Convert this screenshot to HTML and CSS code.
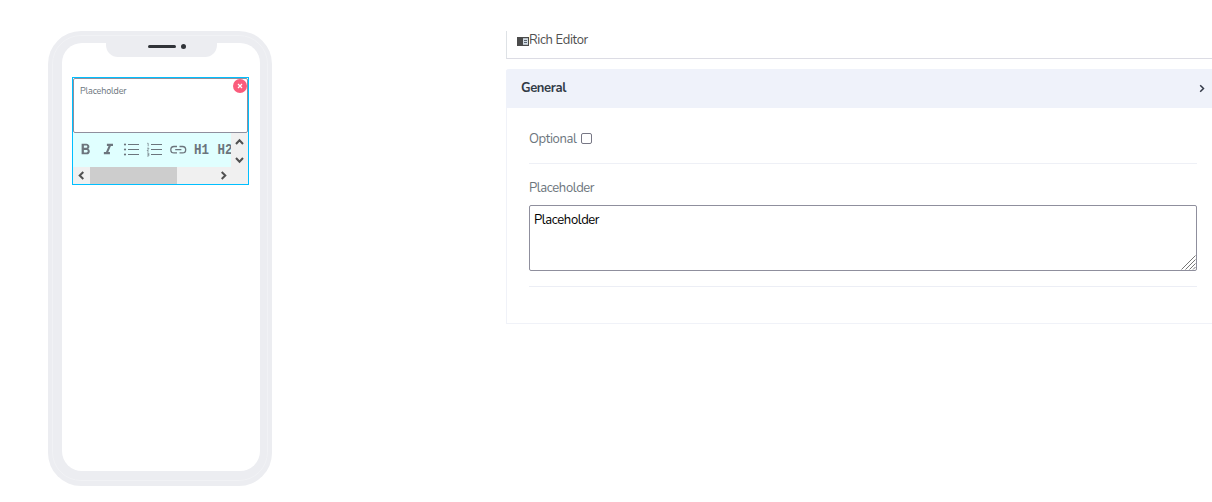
FILE: index.html
```html
<!DOCTYPE html>
<html lang="en">
<head>
<meta charset="utf-8">
<title>Rich Editor</title>
<link rel="stylesheet" href="styles.css">
</head>
<body>
<main class="page">
  <section class="phone">
    <div class="screen">
      <div class="notch"><span class="speaker"></span><span class="camera"></span></div>
      <div class="editor">
        <div class="editor-text">Placeholder</div>
        <button class="remove" aria-label="Remove"><svg width="6" height="6" viewBox="0 0 6 6"><path d="M1 1l4 4M5 1l-4 4"/></svg></button>
        <div class="tools">
          <svg class="toolbar" width="158" height="34" viewBox="0 0 158 34">
            <g transform="translate(3.3 7.6) scale(.76)"><path d="M15.6 10.79c.97-.67 1.65-1.77 1.65-2.79 0-2.26-1.75-4-4-4H7v14h7.04c2.09 0 3.71-1.7 3.71-3.79 0-1.52-.86-2.82-2.15-3.42zM10 6.500h3c.83 0 1.500.67 1.500 1.500s-.67 1.500-1.500 1.500h-3v-3zm3.500 9H10v-3h3.500c.83 0 1.500.67 1.500 1.500s-.67 1.500-1.500 1.500z"/></g>
            <g transform="translate(26.300 7.600) scale(.76)"><path d="M10 4v3h2.210l-3.420 8H6v3h8v-3h-2.210l3.420-8H18V4z"/></g>
            <path d="M55 11h11v1H55zm0 5h11v1H55zm0 5h11v1H55z"/>
            <circle cx="52" cy="11.500" r="1.100"/><circle cx="52" cy="16.500" r="1.100"/><circle cx="52" cy="21.500" r="1.100"/>
            <path d="M78 11h11v1H78zm0 5h11v1H78zm0 5h11v1H78z"/>
            <path class="numbers" d="M74.200 10.300h1v3M74 15.200h2l-2 2.800h2M74 20h1.800v3H74m.5-1.500h1.300"/>
            <path class="link" d="M104 13.500h-3a3.200 3.200 0 0 0 0 6.400h3M106.500 13.500h3a3.200 3.200 0 0 1 0 6.400h-3M102.200 16.700h6.200"/>
            <text x="121" y="21" textLength="15" lengthAdjust="spacingAndGlyphs">H1</text>
            <text x="144.500" y="21" textLength="15" lengthAdjust="spacingAndGlyphs">H2</text>
          </svg>
          <div class="vscroll">
            <svg width="17" height="34" viewBox="0 0 17 34"><path d="M5 11l3.500-3.800L12 11M5 25l3.500 3.800L12 25"/></svg>
          </div>
          <div class="hscroll">
            <svg width="17" height="17" viewBox="0 0 17 17"><path d="M10.300 5L6.700 8.500l3.600 3.500"/></svg>
            <span class="thumb"></span>
            <svg class="right" width="17" height="17" viewBox="0 0 17 17"><path d="M6.700 5l3.600 3.500L6.700 12"/></svg>
          </div>
        </div>
      </div>
    </div>
  </section>
  <section class="settings">
    <header class="title"><svg width="12" height="10" viewBox="0 0 12 10"><path class="fill" d="M0 0h12v9H0z"/><path class="pane" d="M6 1.200h5v6.600H6z"/><path class="line" d="M7 3.500h3M7 5.500h3"/></svg><span>Rich Editor</span></header>
    <div class="card">
      <div class="card-head"><b>General</b><svg width="6" height="9" viewBox="0 0 6 9"><path d="M1.200 1.200L4.500 4.500 1.200 7.800"/></svg></div>
      <div class="card-body">
        <div class="optional"><label for="optional">Optional</label><input id="optional" type="checkbox"></div>
        <div class="field">
          <label for="placeholder">Placeholder</label>
          <div class="area-wrap"><textarea id="placeholder">Placeholder</textarea><svg class="grip" width="15" height="15" viewBox="0 0 15 15"><path d="M.5 14.500l14-14M4.500 14.500l10-10M8.500 14.500l6-6M12 14.500l2.500-2.500"/></svg></div>
        </div>
      </div>
    </div>
  </section>
</main>
</body>
</html>
```
FILE: styles.css
```css
* { box-sizing: border-box; }
body { margin: 0; background: #fff; font-family: "Nunito", "Noto Sans", sans-serif; font-size: 13px; letter-spacing: -.38px; color: #6c757d; overflow: hidden; }
svg { display: block; flex: none; }
.page { display: flex; height: 502px; padding: 31px 0 0 48px; }
.phone { position: relative; flex: none; width: 224px; height: 455px; padding: 12px 12px 15px 14px; border-radius: 33px; background: #ecedf1; }
.phone::before { content: ""; position: absolute; inset: 4px 4px 5px; border: 1px solid #f1f2f5; border-radius: 29px; }
.screen { position: relative; height: 428px; padding: 0 11px 0 10px; border-radius: 20px; background: #fff; }
.notch { display: flex; gap: 5px; width: 111px; height: 14px; margin-left: 34px; padding: 1px 0 0 42px; border-radius: 0 0 12px 12px; background: #ecedf1; }
.speaker { width: 28px; height: 3px; margin-top: 1px; border-radius: 2px; background: #303338; }
.camera { width: 5px; height: 5px; border-radius: 50%; background: #303338; }
.editor { position: relative; width: 177px; height: 108px; margin-top: 20px; border: 1px solid #00bfff; }
.editor-text { height: 55px; padding: 6px; border: 1px solid #8f8f9d; border-radius: 2px; font-size: 9px; line-height: 12px; letter-spacing: -.15px; }
.remove { position: absolute; top: 1px; right: 1px; display: grid; place-items: center; width: 14px; height: 14px; padding: 0; border: 0; border-radius: 50%; background: #fa5c7c; }
.remove path { stroke: #fff; stroke-width: 1.2; }
.tools { display: grid; grid-template: 34px 17px / 158px 17px; background: #f0f0f0; }
.toolbar { background: #e0ffff; fill: #6c757d; overflow: hidden; }
.toolbar .numbers { fill: none; stroke: #6c757d; stroke-width: .7; }
.toolbar .link { fill: none; stroke: #6c757d; stroke-width: 1.3; }
.toolbar text { font: bold 14px "Liberation Mono", monospace; letter-spacing: 0; }
.vscroll path, .hscroll path { fill: none; stroke: #505050; stroke-width: 2; }
.hscroll { display: flex; width: 175px; height: 17px; }
.thumb { width: 87px; background: #cdcdcd; }
.hscroll .right { margin-left: 38px; }
.settings { flex: 1; margin-left: 234px; }
.title { display: flex; align-items: flex-start; height: 28px; padding-left: 10px; border-left: 1px solid #dee2e6; border-bottom: 1px solid #dcdce4; color: #505050; line-height: 19px; }
.title svg { margin-top: 6px; }
.title .fill { fill: #4b4b4b; }
.title .pane { fill: #d4dde5; }
.title .line { stroke: #5b6570; }
.card { height: 255px; margin-top: 10px; border: solid #f0f2f8; border-width: 0 0 1px 1px; border-radius: 3px 0 0 0; }
.card-head { display: flex; align-items: center; justify-content: space-between; height: 39px; margin-left: -1px; padding: 0 7px 2px 15px; border-radius: 3px 0 0 0; background: #eff2fa; color: #313a46; }
.card-head svg { margin-top: 2px; }
.card-head path { fill: none; stroke: #343a48; stroke-width: 1.5; }
.card-body { padding: 22px 15px 0 22px; }
.optional { display: flex; height: 34px; border-bottom: 1px solid #eef0f6; line-height: 18px; }
.optional input { appearance: none; width: 11px; height: 11px; margin: 3px 0 0 5px; border: 1px solid #777785; border-radius: 2px; }
.field { height: 123px; padding-top: 15px; border-bottom: 1px solid #eceef5; }
.field label { display: block; height: 26px; line-height: 18px; }
.area-wrap { position: relative; height: 66px; }
textarea { display: block; width: 100%; height: 66px; padding: 5px 4px; border: 1px solid #8f8f9d; border-radius: 2px; background: #fff; color: #000; font: inherit; letter-spacing: inherit; line-height: 18px; resize: none; overflow: hidden; }
.grip { position: absolute; right: 1px; bottom: 1px; }
.grip path { stroke: #777; }
```
